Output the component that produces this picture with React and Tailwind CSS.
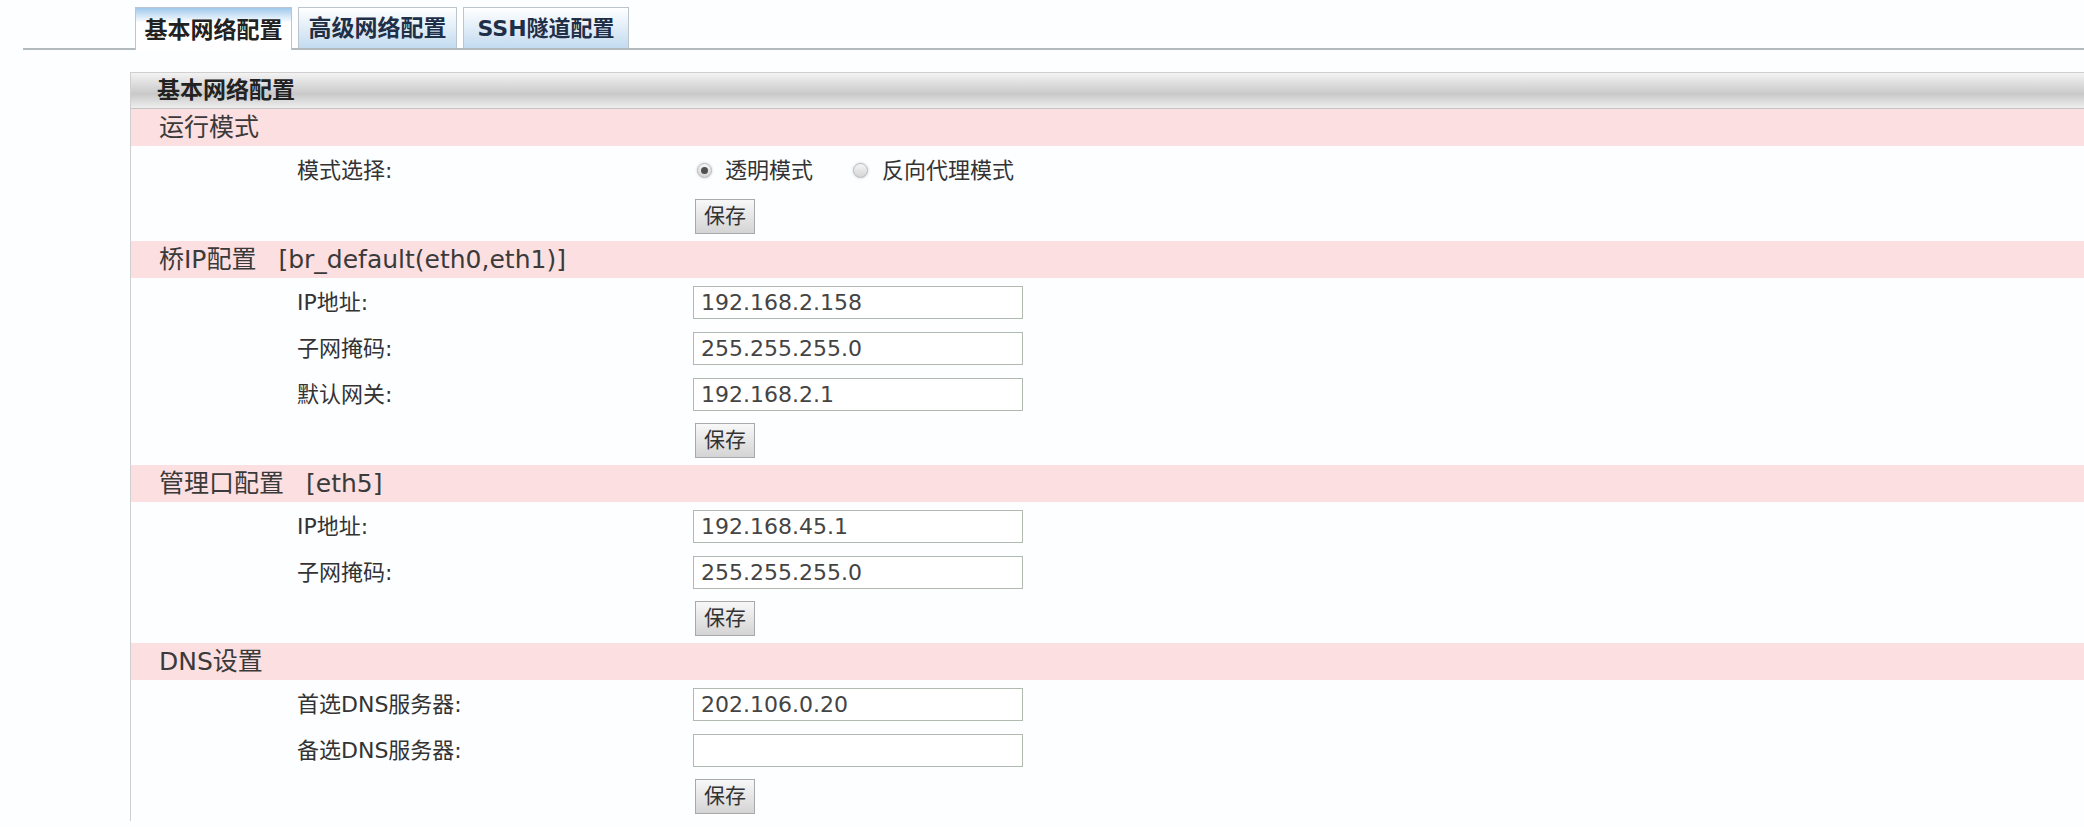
const sections = [
  {
    title: '运行模式',
    rows: [{ type: 'radio' }, { type: 'save' }],
  },
  {
    title: '桥IP配置',
    extra: '[br_default(eth0,eth1)]',
    rows: [
      { label: 'IP地址:', value: '192.168.2.158' },
      { label: '子网掩码:', value: '255.255.255.0' },
      { label: '默认网关:', value: '192.168.2.1' },
      { type: 'save' },
    ],
  },
  {
    title: '管理口配置',
    extra: '[eth5]',
    rows: [
      { label: 'IP地址:', value: '192.168.45.1' },
      { label: '子网掩码:', value: '255.255.255.0' },
      { type: 'save' },
    ],
  },
  {
    title: 'DNS设置',
    rows: [
      { label: '首选DNS服务器:', value: '202.106.0.20' },
      { label: '备选DNS服务器:', value: '' },
      { type: 'save' },
    ],
  },
];

function Radio({ checked }) {
  return (
    <span className="w-[15px] h-[15px] rounded-full border border-[#b8b8b8] bg-gradient-to-b from-[#f6f6f6] to-[#d4d4d4] flex items-center justify-center shadow-[0_0_3px_rgba(0,0,0,0.2)]">
      {checked && <span className="w-[7px] h-[7px] rounded-full bg-[#505050]"></span>}
    </span>
  );
}

function SaveButton() {
  return (
    <button className="h-[35px] w-[60px] border border-[#a9a9a9] bg-gradient-to-b from-[#f8f8f8] to-[#d4d4d4] text-[21px] text-[#333] leading-none">
      保存
    </button>
  );
}

function Row({ row }) {
  let content = null;
  if (row.type === 'radio') {
    content = (
      <div className="flex items-center h-[34px] pl-[4px]">
        <Radio checked />
        <span className="ml-[13px]">透明模式</span>
        <span className="ml-[40px]"><Radio /></span>
        <span className="ml-[14px]">反向代理模式</span>
      </div>
    );
  } else if (row.type === 'save') {
    content = <div className="pl-[2px]"><SaveButton /></div>;
  } else {
    content = (
      <div className="w-[330px] h-[33px] border border-[#b0bab0] bg-white px-[7px] flex items-center text-[22px] text-[#444]">
        {row.value}
      </div>
    );
  }
  return (
    <div className="flex items-center h-[34px]">
      <div className="w-[562px] pl-[166px] text-[#333]">
        {row.label || (row.type === 'radio' ? '模式选择:' : '')}
      </div>
      {content}
    </div>
  );
}

export default function App() {
  return (
    <div className="w-[2084px] h-[827px] overflow-hidden bg-[#fdfeff] text-[22px] text-[#333] font-['DejaVu_Sans','Noto_Sans_CJK_SC',sans-serif]">
      {/* tab bar */}
      <div className="ml-[23px] pt-[8px] border-b-[2px] border-[#b2babd] flex items-end h-[50px]">
        <div className="ml-[112px] flex gap-[6px] items-end -mb-[2px]">
          <div className="w-[157px] h-[43px] border border-b-0 border-[#b9c6d2] bg-gradient-to-b from-[#9fc8ec] via-[#ffffff] via-[35%] to-[#ffffff] flex items-end justify-center pb-[3px] font-bold text-[23px] text-[#222]">
            基本网络配置
          </div>
          <div className="w-[159px] h-[41px] mb-[2px] border border-b-0 border-[#bcc4cc] bg-gradient-to-b from-[#ffffff] to-[#c3dbf0] flex items-end justify-center pb-[3px] font-bold text-[23px] text-[#1f2f48]">
            高级网络配置
          </div>
          <div className="w-[166px] h-[41px] mb-[2px] border border-b-0 border-[#bcc4cc] bg-gradient-to-b from-[#ffffff] to-[#c3dbf0] flex items-end justify-center pb-[3px] font-bold text-[22px] text-[#1f2f48]">
            SSH隧道配置
          </div>
        </div>
      </div>

      {/* panel */}
      <div className="ml-[130px] mt-[22px] border-l border-t border-[#cfcfcf]">
        <div className="h-[36px] border-b border-[#c4c4c4] bg-gradient-to-b from-[#f3f3f3] via-[#c9c9c9] via-[60%] to-[#eeeeee] flex items-center pl-[26px] font-bold text-[23px] text-[#222]">
          基本网络配置
        </div>
        {sections.map((s) => (
          <div key={s.title}>
            <div className="h-[37px] bg-[#fcdfe1] flex items-center pl-[28px] text-[25px] text-[#3a3a3a]">
              <span>{s.title}</span>
              {s.extra && <span className="ml-[22px]">{s.extra}</span>}
            </div>
            <div className="pt-[7px] pb-[8px] flex flex-col gap-[12px]">
              {s.rows.map((r, i) => (
                <Row key={i} row={r} />
              ))}
            </div>
          </div>
        ))}
      </div>
    </div>
  );
}
